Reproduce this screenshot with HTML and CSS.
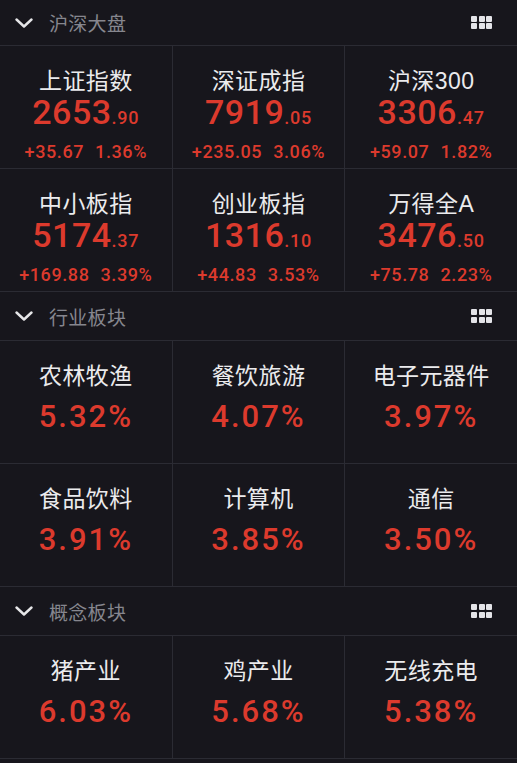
FILE: index.html
```html
<!DOCTYPE html>
<html lang="zh-CN">
<head>
  <meta charset="UTF-8" />
  <meta name="viewport" content="width=device-width, initial-scale=1.0" />
  <title>行情</title>
  <link rel="stylesheet" href="styles.css">
</head>
<body>

  <!-- 沪深大盘 -->
  <section class="block">
    <div class="block-head first">
      <svg class="chevron" width="18" height="10" viewBox="0 0 18 10"><path d="M1.5 1.5 L9 8.5 L16.5 1.5" fill="none" stroke="#e6e6e8" stroke-width="2.4" stroke-linecap="round" stroke-linejoin="round"/></svg>
      <span class="head-title">沪深大盘</span>
      <span class="grid-icon"><i></i><i></i><i></i><i></i><i></i><i></i></span>
    </div>
    <div class="cells">
      <div class="cell index">
        <div class="name">上证指数</div>
        <div class="price">2653<small>.90</small></div>
        <div class="change"><span>+35.67</span><span>1.36%</span></div>
      </div>
      <div class="cell index">
        <div class="name">深证成指</div>
        <div class="price">7919<small>.05</small></div>
        <div class="change"><span>+235.05</span><span>3.06%</span></div>
      </div>
      <div class="cell index">
        <div class="name">沪深300</div>
        <div class="price">3306<small>.47</small></div>
        <div class="change"><span>+59.07</span><span>1.82%</span></div>
      </div>
      <div class="cell index">
        <div class="name">中小板指</div>
        <div class="price">5174<small>.37</small></div>
        <div class="change"><span>+169.88</span><span>3.39%</span></div>
      </div>
      <div class="cell index">
        <div class="name">创业板指</div>
        <div class="price">1316<small>.10</small></div>
        <div class="change"><span>+44.83</span><span>3.53%</span></div>
      </div>
      <div class="cell index">
        <div class="name">万得全A</div>
        <div class="price">3476<small>.50</small></div>
        <div class="change"><span>+75.78</span><span>2.23%</span></div>
      </div>
    </div>
  </section>

  <!-- 行业板块 -->
  <section class="block">
    <div class="block-head">
      <svg class="chevron" width="18" height="10" viewBox="0 0 18 10"><path d="M1.5 1.5 L9 8.5 L16.5 1.5" fill="none" stroke="#e6e6e8" stroke-width="2.4" stroke-linecap="round" stroke-linejoin="round"/></svg>
      <span class="head-title">行业板块</span>
      <span class="grid-icon"><i></i><i></i><i></i><i></i><i></i><i></i></span>
    </div>
    <div class="cells">
      <div class="cell sector"><div class="name">农林牧渔</div><div class="pct">5.32%</div></div>
      <div class="cell sector"><div class="name">餐饮旅游</div><div class="pct">4.07%</div></div>
      <div class="cell sector"><div class="name">电子元器件</div><div class="pct">3.97%</div></div>
      <div class="cell sector"><div class="name">食品饮料</div><div class="pct">3.91%</div></div>
      <div class="cell sector"><div class="name">计算机</div><div class="pct">3.85%</div></div>
      <div class="cell sector"><div class="name">通信</div><div class="pct">3.50%</div></div>
    </div>
  </section>

  <!-- 概念板块 -->
  <section class="block">
    <div class="block-head">
      <svg class="chevron" width="18" height="10" viewBox="0 0 18 10"><path d="M1.5 1.5 L9 8.5 L16.5 1.5" fill="none" stroke="#e6e6e8" stroke-width="2.4" stroke-linecap="round" stroke-linejoin="round"/></svg>
      <span class="head-title">概念板块</span>
      <span class="grid-icon"><i></i><i></i><i></i><i></i><i></i><i></i></span>
    </div>
    <div class="cells">
      <div class="cell sector"><div class="name">猪产业</div><div class="pct">6.03%</div></div>
      <div class="cell sector"><div class="name">鸡产业</div><div class="pct">5.68%</div></div>
      <div class="cell sector"><div class="name">无线充电</div><div class="pct">5.38%</div></div>
    </div>
  </section>

</body>
</html>
```

FILE: styles.css
```css
body, html {
  margin: 0;
  padding: 0;
  overflow: hidden;
  background-color: #17161c;
  font-family: "Liberation Sans", "Noto Sans CJK SC", sans-serif;
}

.block-head {
  display: flex;
  align-items: center;
  height: 48px;
  padding: 0 25px 0 15px;
}

.block-head.first {
  height: 45px;
}

.chevron {
  flex: none;
}

.head-title {
  margin-left: 16px;
  font-size: 19px;
  letter-spacing: 0.3px;
  color: #86868e;
  flex: 1;
}

.grid-icon {
  display: grid;
  grid-template-columns: repeat(3, 6px);
  grid-auto-rows: 6px;
  gap: 1.5px;
}

.grid-icon i {
  display: block;
  background-color: #e4e4e8;
  border-radius: 1px;
}

.cells {
  display: grid;
  grid-template-columns: 1fr 1fr 1fr;
  gap: 1px;
  background-color: #2b2b33;
  border-top: 1px solid #2b2b33;
  border-bottom: 1px solid #2b2b33;
}

.cell {
  background-color: #17161c;
  height: 122px;
  box-sizing: border-box;
  padding-top: 22px;
  display: flex;
  flex-direction: column;
  align-items: center;
}

.name {
  font-size: 23px;
  line-height: 26px;
  letter-spacing: 0.4px;
  color: #ebebed;
}

.price,
.change,
.pct {
  font-family: Roboto, "Liberation Sans", sans-serif;
  font-weight: 500;
  color: #dc3a2d;
}

.price {
  font-size: 34px;
  line-height: 36px;
  letter-spacing: 0.5px;
}

.price small {
  font-size: 18px;
  letter-spacing: 0.8px;
}

.change {
  display: flex;
  gap: 11px;
  margin-top: 6px;
  font-size: 18px;
  line-height: 20px;
  letter-spacing: 0.6px;
}

.pct {
  margin-top: 11px;
  font-size: 31px;
  line-height: 34px;
  letter-spacing: 2px;
}
```
